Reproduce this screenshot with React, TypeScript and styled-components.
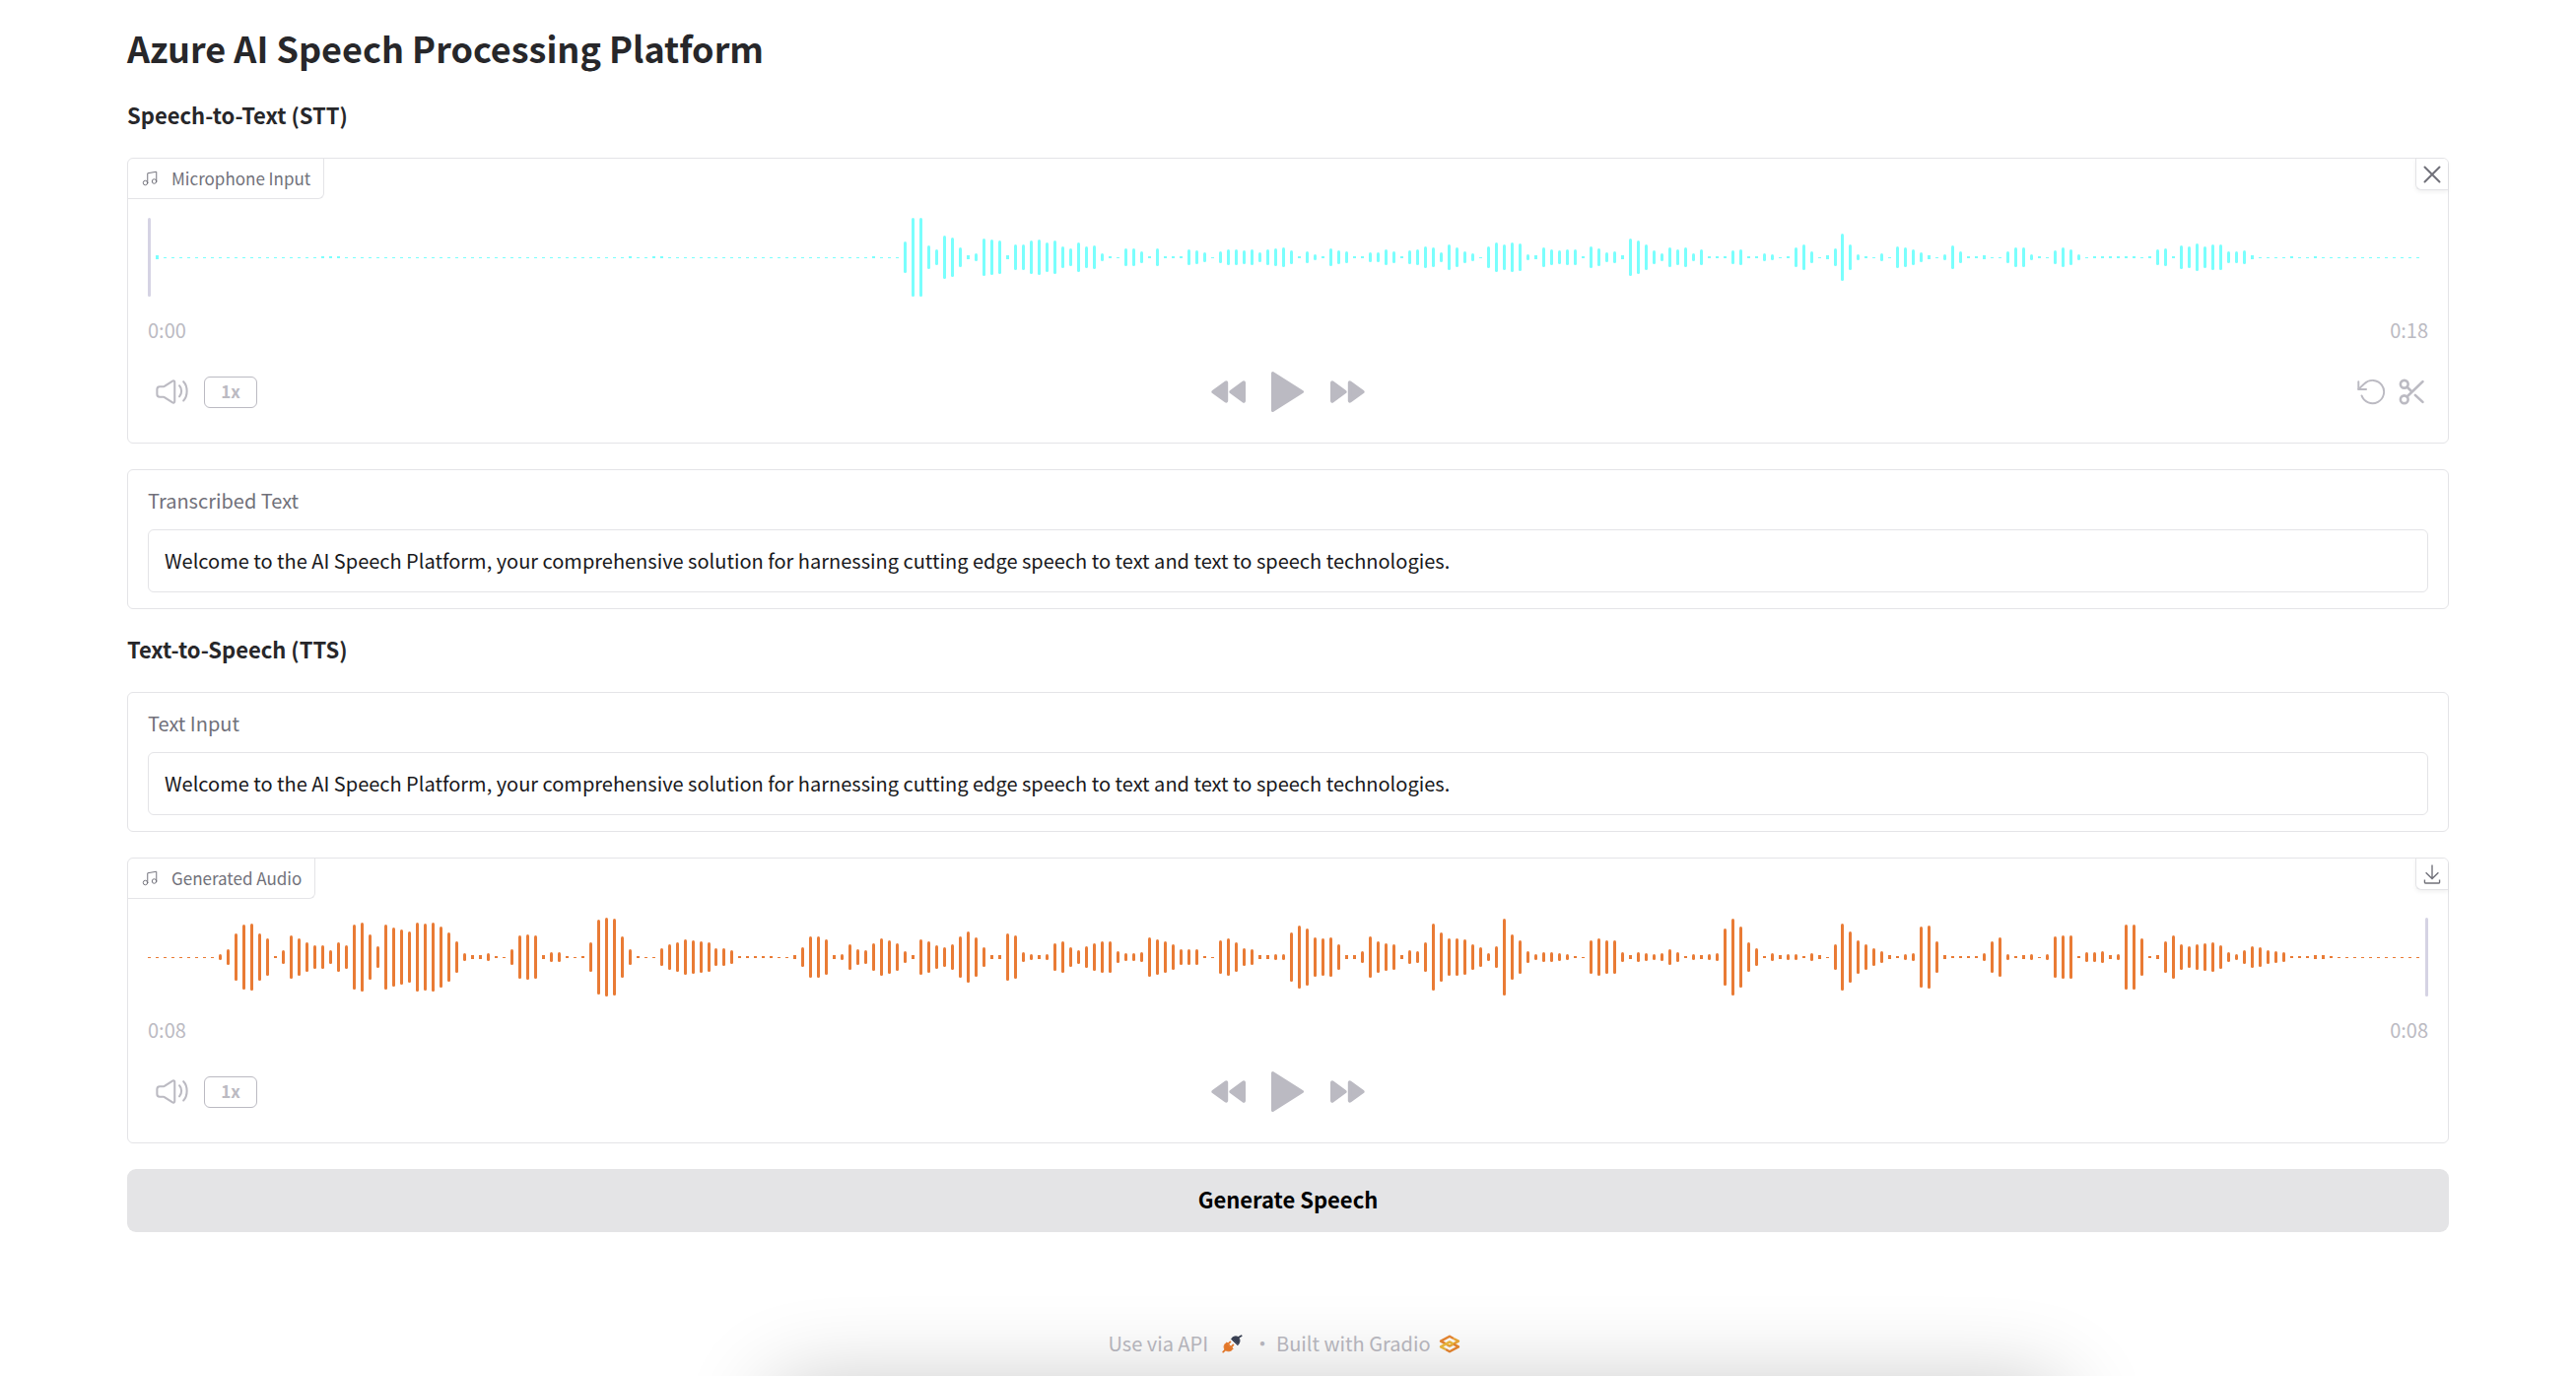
import React, { useState } from "react";
import styled, { createGlobalStyle } from "styled-components";

const GlobalStyle = createGlobalStyle`
  * { box-sizing: border-box; }
  html, body { margin: 0; padding: 0; background: #ffffff; }
  body, button, input {
    font-family: "Noto Sans CJK SC", "Noto Sans", sans-serif;
  }
`;

const Page = styled.main`
  display: flex;
  flex-direction: column;
  padding: 24px 129px 16px;
  color: #27272a;
`;

const Title = styled.h1`
  margin: 0;
  font-size: 36px;
  line-height: 48px;
  font-weight: 600;
`;

const Section = styled.section`
  display: flex;
  flex-direction: column;
  gap: 26px;
`;

const SectionTitle = styled.h2<{ $first?: boolean }>`
  margin: ${(p) => (p.$first ? "28px 0 2px" : "24px 0 2px")};
  font-size: 22px;
  line-height: 32px;
  font-weight: 600;
`;

const Block = styled.div`
  border: 1px solid #e4e4e7;
  border-radius: 6px;
  background: #ffffff;
`;

const BlockHeader = styled.div`
  display: flex;
  justify-content: space-between;
  align-items: flex-start;
`;

const Tag = styled.div`
  display: flex;
  align-items: center;
  gap: 13px;
  height: 41px;
  padding: 0 13px;
  border: solid #e4e4e7;
  border-width: 0 1px 1px 0;
  border-radius: 5px 0 6px 0;
  color: #71717a;
  font-size: 17px;
  line-height: 24px;
`;

const CornerButton = styled.button`
  display: flex;
  align-items: center;
  justify-content: center;
  width: 33px;
  height: 32px;
  padding: 0;
  border: solid #e4e4e7;
  border-width: 0 0 1px 1px;
  border-radius: 0 5px 0 6px;
  background: #ffffff;
  box-shadow: 0 2px 4px rgba(0, 0, 0, 0.06);
  color: #71717a;
  cursor: pointer;
`;

const PlayerBody = styled.div`
  display: flex;
  flex-direction: column;
  padding: 0 20px 31px;
`;

const WaveArea = styled.div`
  position: relative;
  height: 80px;
  margin-top: 19px;
`;

const Wave = styled.svg`
  display: block;
  width: 100%;
  height: 80px;
`;

const Playhead = styled.span<{ $atEnd?: boolean }>`
  position: absolute;
  top: 0;
  ${(p) => (p.$atEnd ? "right: 0;" : "left: 0;")}
  width: 3px;
  height: 80px;
  border-radius: 2px;
  background: #d5d3e4;
`;

const Times = styled.div`
  display: flex;
  justify-content: space-between;
  margin: 20px 0 28px;
  color: #bbbac2;
  font-size: 20px;
  line-height: 28px;
`;

const Controls = styled.div`
  display: grid;
  grid-template-columns: 1fr auto 1fr;
  align-items: center;
  height: 41px;
  color: #bbbac2;
`;

const ControlGroup = styled.div<{ $gap: number; $align: string }>`
  display: flex;
  align-items: center;
  justify-content: ${(p) => p.$align};
  gap: ${(p) => p.$gap}px;
`;

const LeftGroup = styled(ControlGroup)`
  padding-left: 8px;
`;

const RightGroup = styled(ControlGroup)`
  padding-right: 1px;
`;

const IconButton = styled.button`
  display: flex;
  padding: 0;
  border: 0;
  background: none;
  color: inherit;
  cursor: pointer;
`;

const SpeedButton = styled.button`
  width: 54px;
  height: 32px;
  padding: 0 0 2px;
  border: 1px solid #bbbac2;
  border-radius: 6px;
  background: none;
  color: #bbbac2;
  font-size: 17px;
  line-height: 24px;
  font-weight: 700;
  cursor: pointer;
`;

const Field = styled(Block)`
  display: flex;
  flex-direction: column;
  gap: 15px;
  padding: 17px 20px 16px;
`;

const FieldLabel = styled.label`
  color: #71717a;
  font-size: 20px;
  line-height: 28px;
`;

const TextBox = styled.input`
  width: 100%;
  height: 64px;
  padding: 0 16px 2px;
  border: 1px solid #e4e4e7;
  border-radius: 6px;
  background: #ffffff;
  color: #18181b;
  font-size: 20px;
  outline: none;
`;

const PrimaryButton = styled.button`
  height: 64px;
  padding: 0 0 4px;
  border: 0;
  border-radius: 9px;
  background: #e4e4e6;
  color: #000000;
  font-size: 22px;
  font-weight: 600;
  cursor: pointer;
`;

const Footer = styled.footer`
  display: flex;
  align-items: center;
  justify-content: center;
  margin-top: 99px;
  padding-right: 8px;
  color: #bbbac2;
  font-size: 20px;
  line-height: 28px;
`;

const FooterLink = styled.a<{ $gap: number }>`
  display: flex;
  align-items: center;
  gap: ${(p) => p.$gap}px;
  color: inherit;
  text-decoration: none;
`;

const Dot = styled.span`
  margin: 0 4px 0 10px;
`;

const DockShadow = styled.div`
  position: fixed;
  left: 30%;
  right: 20%;
  bottom: -310px;
  height: 300px;
  border-radius: 20px;
  box-shadow: 0 0 90px rgba(0, 0, 0, 0.24);
  pointer-events: none;
`;

/* Bar heights in pixels; "n*k" repeats height n for k bars. */
const parseBars = (source: string): number[] =>
  source
    .trim()
    .split(/\s+/)
    .flatMap((token) => {
      const [height, count] = token.split("*").map(Number);
      return Array(count || 1).fill(height);
    });

const MIC_BARS = parseBars(`
  1 4 1*20 2*3 1*36 2 1*2 2*2 1*26 2 1*3
  32 80 80 24 16 44 40 20 4 8 38 36 34 4 26 26 34 36 30 34 22 18 30 22 24 8 2 1
  18 18 12 2 18 2 2 2 16 14 10 1 12 16 16 14 16 10 16 18 20 14 2 12 6 2 18 14 12 2 2
  10 10 16 12 2 14 16 22 20 10 26 20 12 8 1 22 30 26 30 28 6 4 20 16 14 16 16 2
  22 18 10 12 4 38 34 26 14 8 20 16 20 8 16 2 2 2 14 16 2 2 8 6 1 2 20 26 12 1 4
  18 48 26 6 2 1 8 1 22 20 16 10 4 1 6 24 12 2 2 4 1 1 12 20 20 6 2 1 14 20 16 6 1
  2*6 1 2 16 18 2 24 22 28 22 26 26 12 12 14 4 1*4 2 1*2 2 1*13
`);

const SPEECH_BARS = parseBars(`
  1*9 6 16 48 66 68 48 38 2 14 44 38 30 24 24 14 30 24 66 70 46 22 66 60 56 52 70 68 70
  62 50 32 8 4 4 8 2 1 16 44 46 44 4 10 10 2 1 2 30 76 80 78 42 16 2 1 1
  18 26 30 36 34 32 30 18 18 14 2*5 1*2 4 20 42 42 36 4 6 26 16 14 28 38 34 28
  12 4 36 32 24 20 26 42 52 40 20 4 4 48 44 10 6 4 6 28 32 20 14 22 28 32 32 12 8 8 10
  40 36 32 26 16 16 16 2 1 34 38 30 18 16 4 4 6 6 50 64 58 40 38 40 26 4 4 12
  42 32 28 26 4 14 12 30 68 50 38 38 36 26 20 8 22 78 46 34 12 6 10 10 8 6 2 1
  34 38 34 34 10 4 10 8 6 8 16 10 2 6 4 6 8 58 78 62 30 18 2 8 4 6 6 2 8 4 1
  26 68 52 34 26 18 12 4 2 6 8 62 64 32 4 2*4 8 32 40 6 2 4 6 1 6 42 44 44 2
  10 10 12 4 6 66 66 38 2 4 32 44 26 22 26 28 30 24 10 6 14 22 20 14 12 10 2*3 4 4 2 1*11
`);

const BAR_PITCH = 7.993;

function Waveform({ bars, color }: { bars: number[]; color: string }) {
  return (
    <Wave aria-hidden="true" fill={color}>
      {bars.map((h, i) => (
        <rect
          key={i}
          x={Math.round(i * BAR_PITCH)}
          y={h === 1 ? 40 : 40 - h / 2}
          width={3}
          height={h}
          rx={h > 4 ? 1.5 : 0}
        />
      ))}
    </Wave>
  );
}

const MusicIcon = () => (
  <svg width="18" height="18" viewBox="0 0 24 24" fill="none" stroke="currentColor" strokeWidth="1.3" strokeLinecap="round" strokeLinejoin="round">
    <path d="M9 18V5l12-2v13" />
    <circle cx="6" cy="18" r="3" />
    <circle cx="18" cy="16" r="3" />
  </svg>
);

const ClearIcon = () => (
  <svg width="18" height="18" viewBox="0 0 18 18" fill="none" stroke="currentColor" strokeWidth="2" strokeLinecap="round">
    <path d="M1.5 1.5l15 15M16.5 1.5l-15 15" />
  </svg>
);

const DownloadIcon = () => (
  <svg width="22" height="22" viewBox="0 0 32 32" fill="currentColor">
    <path d="M26 24v4H6v-4H4v4a2 2 0 0 0 2 2h20a2 2 0 0 0 2-2v-4zm0-10l-1.41-1.41L17 20.17V2h-2v18.17l-7.59-7.58L6 14l10 10l10-10z" />
  </svg>
);

const VolumeIcon = () => (
  <svg width="33" height="33" viewBox="0 0 24 24" fill="none" stroke="currentColor" strokeWidth="1.5" strokeLinecap="round" strokeLinejoin="round">
    <path d="M1 13.8571V10.1429C1 9.03829 1.89543 8.14286 3 8.14286H5.9C6.09569 8.14286 6.28708 8.08544 6.45046 7.97772L12.4495 4.02228C13.1144 3.5839 14 4.06075 14 4.85714V19.1429C14 19.9392 13.1144 20.4161 12.4495 19.9777L6.45046 16.0223C6.28708 15.9146 6.09569 15.8571 5.9 15.8571H3C1.89543 15.8571 1 14.9617 1 13.8571Z" />
    <path d="M17.5 7.5C17.5 7.5 19 9 19 11.5C19 14 17.5 15.5 17.5 15.5" />
    <path d="M20.5 4.5C20.5 4.5 23 7 23 11.5C23 16 20.5 18.5 20.5 18.5" />
  </svg>
);

const PlayIcon = () => (
  <svg width="34" height="41" viewBox="0 0 34 41" fill="currentColor" stroke="currentColor" strokeWidth="3" strokeLinejoin="round">
    <path d="M1.5 1.5L31.5 20.5L1.5 39.5Z" />
  </svg>
);

const ForwardIcon = () => (
  <svg width="35" height="23" viewBox="0 0 35 23" fill="currentColor" stroke="currentColor" strokeWidth="4" strokeLinejoin="round">
    <path d="M2 2.3L14.6 11.5L2 20.7Z" />
    <path d="M19.8 2.3L32.6 11.5L19.8 20.7Z" />
  </svg>
);

const RewindIcon = () => (
  <svg width="35" height="23" viewBox="0 0 35 23" fill="currentColor" stroke="currentColor" strokeWidth="4" strokeLinejoin="round">
    <path d="M33 2.3L20.4 11.5L33 20.7Z" />
    <path d="M15.2 2.3L2.4 11.5L15.2 20.7Z" />
  </svg>
);

const UndoIcon = () => (
  <svg width="31" height="31" viewBox="0 0 24 24" fill="none" stroke="currentColor" strokeWidth="1.5" strokeLinecap="round" strokeLinejoin="round">
    <path d="M1 4v6h6" />
    <path d="M3.51 15a9 9 0 1 0 2.13-9.36L1 10" />
  </svg>
);

const TrimIcon = () => (
  <svg width="31" height="31" viewBox="0 0 24 24" fill="none" stroke="currentColor" strokeWidth="2" strokeLinecap="round" strokeLinejoin="round">
    <circle cx="6" cy="6" r="3" />
    <circle cx="6" cy="18" r="3" />
    <path d="M20.5 4L8.12 15.88M14.6 14.6L20.5 20M8.12 8.12L12 12" />
  </svg>
);

const PlugIcon = () => (
  <svg width="21" height="19" viewBox="0 0 21 19" strokeLinecap="round" strokeLinejoin="round">
    <path d="M9.6 4.2C11.2 1.8 14.2 1.2 16.6 2.6C18.6 5 18.4 8 16.2 10.4Z" fill="#3b4255" stroke="#3b4255" />
    <path d="M17 2.8L19.6 1.2" stroke="#3b4255" strokeWidth="1.8" />
    <path d="M4.6 8.2C1.8 10 1.4 13 3.2 15.6C6.2 17.6 9.4 17 11 14.4Z" fill="#ee7d2b" stroke="#ee7d2b" />
    <path d="M3.4 15.4L1.2 17.6M6.2 9.6L8.4 7.4M9.4 12.6L11.4 10.4" stroke="#ee7d2b" strokeWidth="1.8" />
  </svg>
);

const GradioLogo = () => (
  <svg width="22" height="19" viewBox="0 0 22 19" fill="none" strokeWidth="2.4" strokeLinejoin="round">
    <path d="M7 9.4L2 6.6L11 1.8L15 4" stroke="#e98731" />
    <path d="M15 4L20 6.6L11 11.6L7 9.4" stroke="#eea838" />
    <path d="M15 9.6L20 12.4L11 17.2L7 15" stroke="#e98731" />
    <path d="M7 15L2 12.4L11 7.4L15 9.6" stroke="#eebb3e" />
  </svg>
);

interface PlayerProps {
  label: string;
  bars: number[];
  color: string;
  current: string;
  duration: string;
  atEnd?: boolean;
  action: "clear" | "download";
  editable?: boolean;
}

function AudioPlayer({ label, bars, color, current, duration, atEnd, action, editable }: PlayerProps) {
  return (
    <Block>
      <BlockHeader>
        <Tag>
          <MusicIcon />
          {label}
        </Tag>
        <CornerButton aria-label={action === "clear" ? "Clear" : "Download"}>
          {action === "clear" ? <ClearIcon /> : <DownloadIcon />}
        </CornerButton>
      </BlockHeader>
      <PlayerBody>
        <WaveArea>
          <Waveform bars={bars} color={color} />
          <Playhead $atEnd={atEnd} />
        </WaveArea>
        <Times>
          <time>{current}</time>
          <time>{duration}</time>
        </Times>
        <Controls>
          <LeftGroup $gap={16} $align="flex-start">
            <IconButton aria-label="Adjust volume">
              <VolumeIcon />
            </IconButton>
            <SpeedButton>1x</SpeedButton>
          </LeftGroup>
          <ControlGroup $gap={26} $align="center">
            <IconButton aria-label="Skip backwards">
              <RewindIcon />
            </IconButton>
            <IconButton aria-label="Play">
              <PlayIcon />
            </IconButton>
            <IconButton aria-label="Skip forward">
              <ForwardIcon />
            </IconButton>
          </ControlGroup>
          <RightGroup $gap={9} $align="flex-end">
            {editable && (
              <>
                <IconButton aria-label="Reset audio">
                  <UndoIcon />
                </IconButton>
                <IconButton aria-label="Trim audio">
                  <TrimIcon />
                </IconButton>
              </>
            )}
          </RightGroup>
        </Controls>
      </PlayerBody>
    </Block>
  );
}

function TextField({ id, label, initial }: { id: string; label: string; initial: string }) {
  const [value, setValue] = useState(initial);
  return (
    <Field>
      <FieldLabel htmlFor={id}>{label}</FieldLabel>
      <TextBox id={id} type="text" value={value} onChange={(e) => setValue(e.target.value)} />
    </Field>
  );
}

const WELCOME =
  "Welcome to the AI Speech Platform, your comprehensive solution for harnessing cutting edge speech to text and text to speech technologies.";

export default function App() {
  return (
    <>
      <GlobalStyle />
      <Page>
        <Title>Azure AI Speech Processing Platform</Title>
        <Section>
          <SectionTitle $first>Speech-to-Text (STT)</SectionTitle>
          <AudioPlayer
            label="Microphone Input"
            bars={MIC_BARS}
            color="#7afffd"
            current="0:00"
            duration="0:18"
            action="clear"
            editable
          />
          <TextField id="transcribed" label="Transcribed Text" initial={WELCOME} />
        </Section>
        <Section>
          <SectionTitle>Text-to-Speech (TTS)</SectionTitle>
          <TextField id="text-input" label="Text Input" initial={WELCOME} />
          <AudioPlayer
            label="Generated Audio"
            bars={SPEECH_BARS}
            color="#e97b35"
            current="0:08"
            duration="0:08"
            atEnd
            action="download"
          />
          <PrimaryButton>Generate Speech</PrimaryButton>
        </Section>
        <Footer>
          <FooterLink href="#api" $gap={14}>
            Use via API
            <PlugIcon />
          </FooterLink>
          <Dot>·</Dot>
          <FooterLink href="#gradio" $gap={8}>
            Built with Gradio
            <GradioLogo />
          </FooterLink>
        </Footer>
      </Page>
      <DockShadow />
    </>
  );
}
